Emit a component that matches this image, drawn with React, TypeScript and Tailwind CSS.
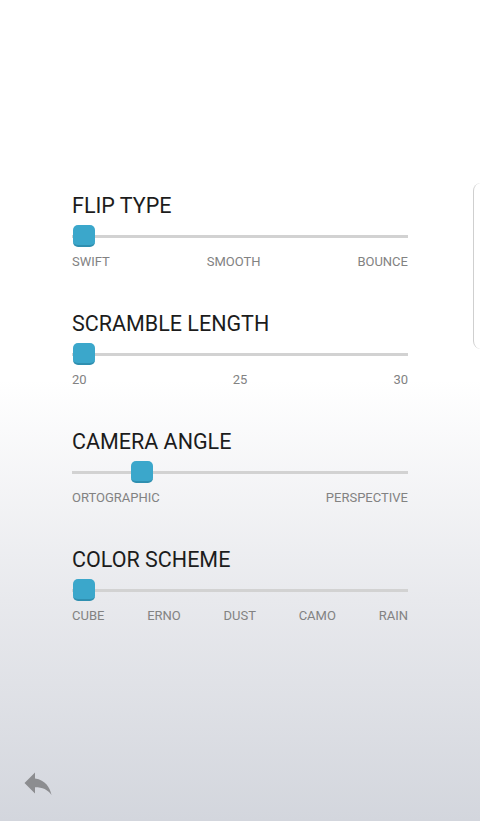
import React from "react";

type Section = { title: string; labels: string[]; pos: number };

const sections: Section[] = [
  { title: "FLIP TYPE", labels: ["SWIFT", "SMOOTH", "BOUNCE"], pos: 1 },
  { title: "SCRAMBLE LENGTH", labels: ["20", "25", "30"], pos: 1 },
  { title: "CAMERA ANGLE", labels: ["ORTOGRAPHIC", "PERSPECTIVE"], pos: 59 },
  { title: "COLOR SCHEME", labels: ["CUBE", "ERNO", "DUST", "CAMO", "RAIN"], pos: 1 },
];

function Slider({ pos }: { pos: number }) {
  return (
    <div className="relative h-[22px] w-full">
      <div className="absolute left-0 right-0 top-[10px] h-[3px] bg-[#d2d2d2]" />
      <div
        className="absolute top-0 h-[22px] w-[22px] rounded-[5px] bg-[#3ba7cb] border-b-[2px] border-[#2f8fb0]"
        style={{ left: pos }}
      />
    </div>
  );
}

export default function App() {
  return (
    <div
      className="relative w-[480px] h-[821px] overflow-hidden bg-[linear-gradient(to_bottom,#ffffff_0px,#ffffff_380px,#e8e9ed_600px,#d3d6dd_821px)]"
      style={{ fontFamily: "Roboto, 'Liberation Sans', sans-serif" }}
    >
      <div className="flex flex-col gap-[42px] pl-[72px] pr-[72px] pt-[194px]">
        {sections.map((s) => (
          <div key={s.title} className="flex flex-col">
            <div className="text-[21.5px] leading-[24px] text-[#1c1c1c]">{s.title}</div>
            <div className="mt-[7px]">
              <Slider pos={s.pos} />
            </div>
            <div className="mt-[7px] flex justify-between text-[13px] leading-[16px] text-[#828282]">
              {s.labels.map((l) => (
                <span key={l}>{l}</span>
              ))}
            </div>
          </div>
        ))}
      </div>

      {/* edge panel handle */}
      <div className="absolute left-[473px] top-[183px] h-[166px] w-[12px] rounded-l-[8px] border-l-[1.5px] border-[#cfcfcf]" />

      {/* undo button */}
      <div className="absolute left-[20px] top-[765px]">
        <svg width="36" height="36" viewBox="0 0 24 24">
          <path
            d="M10 9V5l-7 7 7 7v-4.1c5 0 8.5 1.6 11 5.1-1-5-4-10-11-11z"
            fill="#8c8d90"
          />
        </svg>
      </div>
    </div>
  );
}
